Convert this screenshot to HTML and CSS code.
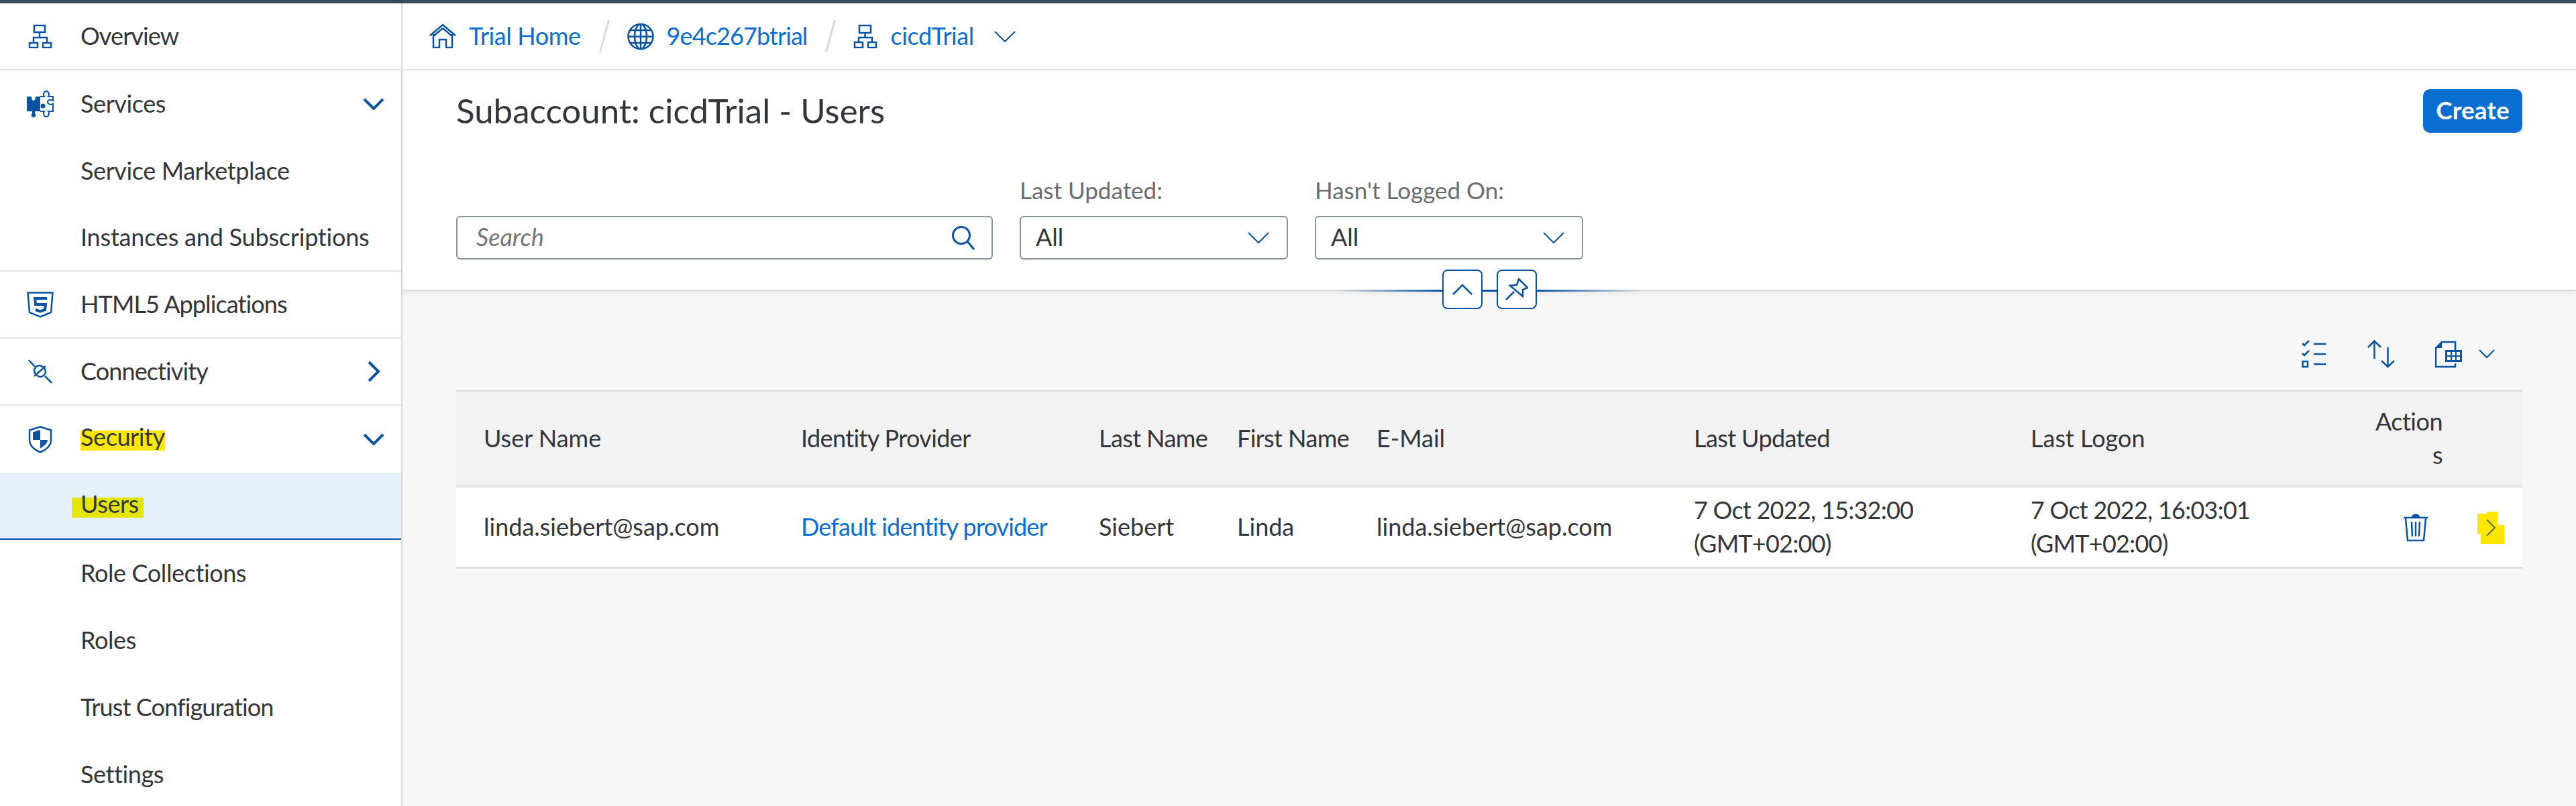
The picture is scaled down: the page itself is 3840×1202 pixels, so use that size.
FILE: index.html

```html
<!DOCTYPE html>
<html lang="en">
<head>
  <meta charset="UTF-8" />
  <title>Subaccount: cicdTrial - Users</title>
  <link rel="stylesheet" href="styles.css">
</head>
<body>

<div class="shell-bar"></div>

<div class="layout">
  <nav class="sidebar">
    <div class="nav-item divided">
      <div class="icon-slot"><svg width="36" height="36" viewBox="0 0 36 36"><path d="M9 2h16v10H9zM2 28h12v7H2zM22 28h12v7H22zM17 12v8M8 28v-8h20v8" /></svg></div>
      <span class="tight">Overview</span>
    </div>
    <div class="nav-item">
      <div class="icon-slot"><svg width="40" height="42" viewBox="0 0 40 42"><path class="solid" d="M0 10h7c0 4 1.500 6 3 6s3-2 3-6h7v22h-8v3c2 1 2 6-2 6s-4-5-2-6v-3H0z" /><circle class="solid" cx="24" cy="24" r="3.500" /><path class="thin" d="M20 10h6c-2-2-1-8 3-8s5 6 3 8h7v6c-4-2-8-1-8 2s4 5 8 3v11h-7c2 2 1 8-3 8s-5-6-3-8h-6" /></svg></div>
      <span>Services</span>
      <svg class="nav-arrow" width="32" height="18" viewBox="0 0 32 18"><path d="M2 2l14 14L30 2" /></svg>
    </div>
    <div class="nav-item sub"><span>Service Marketplace</span></div>
    <div class="nav-item sub divided"><span class="loose">Instances and Subscriptions</span></div>
    <div class="nav-item divided">
      <div class="icon-slot"><svg width="40" height="39" viewBox="0 0 40 39"><path d="M1.500 1.500h37L36 31l-16 6.500L4 31z" /><path class="thick" d="M30 10H12l1 9h15l-1 8-7 2.500-7-2.500" /></svg></div>
      <span class="tight">HTML5 Applications</span>
    </div>
    <div class="nav-item divided">
      <div class="icon-slot"><svg width="36" height="36" viewBox="0 0 36 36"><path d="M1 1l9 10M25 25l10 10" /><rect x="9" y="10" width="17" height="15" rx="7" transform="rotate(45 17.500 17.500)" /><path d="M9 25L26 10" /></svg></div>
      <span class="tight">Connectivity</span>
      <svg class="nav-arrow" width="32" height="32" viewBox="0 0 32 32"><path d="M9 2l14 14L9 30" /></svg>
    </div>
    <div class="nav-item">
      <div class="icon-slot"><svg width="36" height="41" viewBox="0 0 36 41"><path d="M18 1.500l16 5V21c0 9-8 15-16 18.500C10 36 2 30 2 21V6.500z" /><path class="solid" d="M7 9.500l11-3.500v15H7zM18 21h11c0 5-5 9-11 12.500z" /></svg></div>
      <span class="mark">Security</span>
      <svg class="nav-arrow" width="32" height="18" viewBox="0 0 32 18"><path d="M2 2l14 14L30 2" /></svg>
    </div>
    <div class="nav-item sub active"><span class="mark-users">Users</span></div>
    <div class="nav-item sub"><span>Role Collections</span></div>
    <div class="nav-item sub"><span>Roles</span></div>
    <div class="nav-item sub"><span class="tight">Trust Configuration</span></div>
    <div class="nav-item sub"><span>Settings</span></div>
  </nav>

  <main class="content">
    <div class="breadcrumb">
      <a class="crumb">
        <svg width="40" height="36" viewBox="0 0 40 36"><path d="M1 17L20 1l19 16M6 15v20h9V23h10v12h9V15M20 6L6 18M20 6l14 12" /></svg>
        <span>Trial Home</span>
      </a>
      <svg class="crumb-sep" width="16" height="48" viewBox="0 0 16 48"><path d="M1.500 48l13-48" /></svg>
      <a class="crumb">
        <svg width="40" height="41" viewBox="0 0 40 41"><circle cx="20" cy="20.500" r="18.500" /><ellipse cx="20" cy="20.500" rx="9" ry="18.500" /><path d="M20 2v37M4 11h32M2 20.500h36M4 30h32" /></svg>
        <span class="crumb-tight">9e4c267btrial</span>
      </a>
      <svg class="crumb-sep" width="16" height="48" viewBox="0 0 16 48"><path d="M1.500 48l13-48" /></svg>
      <a class="crumb">
        <svg width="36" height="36" viewBox="0 0 36 36"><path d="M9 2h17v11H9zM2 27h12v8H2zM22 27h12v8H22zM17.500 13v7M8 27v-7h20v7" /></svg>
        <span>cicdTrial</span>
      </a>
      <svg class="crumb-arrow" width="32" height="17" viewBox="0 0 32 17"><path d="M1 1l15 15L31 1" /></svg>
    </div>

    <header class="page-header">
      <div class="title-row">
        <h1>Subaccount: cicdTrial - Users</h1>
        <button class="btn-create">Create</button>
      </div>
      <div class="filters">
        <div class="field field-search">
          <div class="input">
            <span class="placeholder">Search</span>
            <svg class="input-icon" width="36" height="36" viewBox="0 0 36 36"><circle cx="15" cy="14" r="12.500" /><path d="M24 23l10 12" /></svg>
          </div>
        </div>
        <div class="field">
          <label>Last Updated:</label>
          <div class="input">
            <span>All</span>
            <svg class="input-arrow" width="32" height="17" viewBox="0 0 32 17"><path d="M1 1l15 15L31 1" /></svg>
          </div>
        </div>
        <div class="field">
          <label>Hasn't Logged On:</label>
          <div class="input">
            <span>All</span>
            <svg class="input-arrow" width="32" height="17" viewBox="0 0 32 17"><path d="M1 1l15 15L31 1" /></svg>
          </div>
        </div>
      </div>
      <div class="header-tools">
        <button class="tool-btn">
          <svg width="30" height="17" viewBox="0 0 30 17"><path d="M1 16L15 2l14 14" /></svg>
        </button>
        <button class="tool-btn">
          <svg width="34" height="33" viewBox="0 0 34 33"><path d="M1 32l12-12M20 1l13 13-7 3 0 10L7 11l10-1z" /></svg>
        </button>
      </div>
    </header>

    <section class="table-area">
      <div class="table-toolbar">
        <svg class="tb-list" width="36" height="42" viewBox="0 0 36 42"><path d="M1 5l3 3 7-7M1 20l3 3 7-7M18 6h18M18 21h18M18 36h18" /><rect x="1.500" y="32" width="7.500" height="8" /></svg>
        <svg class="tb-sort" width="41" height="42" viewBox="0 0 41 42"><path d="M10.500 28V2M1 11l9.500-9.500L20 11M30.500 11v29M21 31l9.500 9L40 31" /></svg>
        <svg class="tb-export" width="40" height="41" viewBox="0 0 40 41"><path d="M30 14V2H10L1 11v28h29v-5" /><path class="solid" d="M10 2v9H1z" /><path class="solid" fill-rule="evenodd" d="M15 14h25v18H15zM18 17v5h5v-5zM25 17v5h5v-5zM32 17v5h5v-5zM18 24v5h5v-5zM25 24v5h5v-5zM32 24v5h5v-5z" /></svg>
        <svg class="tb-arrow" width="24" height="14" viewBox="0 0 24 14"><path d="M1 1l11 11L23 1" /></svg>
      </div>

      <div class="table">
        <div class="table-row table-head">
          <div class="cell">User Name</div>
          <div class="cell tight-cell">Identity Provider</div>
          <div class="cell tight-cell">Last Name</div>
          <div class="cell tight-cell">First Name</div>
          <div class="cell">E-Mail</div>
          <div class="cell tight-cell">Last Updated</div>
          <div class="cell">Last Logon</div>
          <div class="cell cell-actions-head">Actions</div>
        </div>
        <div class="table-row table-body">
          <div class="cell">linda.siebert@sap.com</div>
          <div class="cell link">Default identity provider</div>
          <div class="cell">Siebert</div>
          <div class="cell">Linda</div>
          <div class="cell">linda.siebert@sap.com</div>
          <div class="cell date">7 Oct 2022, 15:32:00 (GMT+02:00)</div>
          <div class="cell date">7 Oct 2022, 16:03:01 (GMT+02:00)</div>
          <div class="cell cell-actions">
            <svg class="row-trash" width="38" height="42" viewBox="0 0 38 42"><path d="M1 6h36M4 7l3 33h24l3-33M13 12l1 22M19 12v22M25 12l-1 22" /><path class="solid" d="M13 5c0-6 12-6 12 0z" /></svg>
            <svg class="row-nav" width="40" height="48" viewBox="0 0 40 48"><path class="marker" d="M0 3h15V0h15v20h10v28H5V33H0z" /><path class="nav-chevron" d="M14 12l12 12-12 12" /></svg>
          </div>
        </div>
      </div>
    </section>
  </main>
</div>

</body>
</html>
```

FILE: styles.css

```css
* {
  box-sizing: border-box;
}
html,
body {
  height: 100%;
}
body {
  margin: 0;
  overflow: hidden;
  font-family: 'Lato', 'Liberation Sans', sans-serif;
  font-size: 36px;
  color: #32363a;
  background: #f7f7f7;
}
svg {
  flex: none;
  display: block;
  fill: none;
  stroke: #0854a0;
  stroke-width: 2.5;
}
svg .solid {
  fill: #0854a0;
  stroke: none;
}
.shell-bar {
  height: 5px;
  background: #354a5f;
}
.layout {
  display: flex;
  height: 1197px;
  overflow: hidden;
}

/* left navigation */
.sidebar {
  flex: none;
  width: 600px;
  height: 100%;
  overflow: hidden;
  background: #fff;
  border-right: 2px solid #d9d9d9;
  letter-spacing: -0.4px;
}
.nav-item {
  display: flex;
  align-items: center;
  height: 100px;
  padding-right: 25px;
}
.nav-item span {
  margin-bottom: 3px;
}
.nav-item.divided {
  border-bottom: 2px solid #e5e5e5;
}
.nav-item.sub {
  padding-left: 120px;
}
.nav-item.active {
  background: #e5f0fa;
  border-bottom: 2px solid #0854a0;
}
.icon-slot {
  flex: none;
  display: flex;
  justify-content: center;
  width: 120px;
}
.icon-slot .thick {
  stroke-width: 4;
}
.icon-slot .thin {
  stroke-width: 2;
}
.tight {
  letter-spacing: -0.9px;
}
.loose {
  letter-spacing: -0.2px;
}
.nav-arrow {
  margin-left: auto;
  stroke-width: 4;
}
.nav-item .mark,
.nav-item .mark-users {
  line-height: 18px;
  padding-bottom: 12px;
  margin-bottom: 0;
}
.nav-item .mark {
  margin-top: 4px;
  background: #ffe600;
}
.nav-item .mark-users {
  margin-top: 6px;
  margin-left: -13px;
  padding-left: 13px;
  padding-right: 7px;
  background: #e5e600;
}

.content {
  flex: 1;
  min-width: 0;
  display: flex;
  flex-direction: column;
}

/* breadcrumb */
.breadcrumb {
  display: flex;
  align-items: center;
  height: 100px;
  padding-left: 40px;
  background: #fff;
  border-bottom: 2px solid #e5e5e5;
  color: #0a6ed1;
  letter-spacing: -0.4px;
}
.crumb {
  display: flex;
  align-items: center;
  gap: 19px;
}
.crumb span {
  margin-bottom: 3px;
}
.crumb-tight {
  letter-spacing: -0.9px;
}
.crumb-sep {
  margin: 0 26px 0 27px;
  stroke: #d9d9d9;
  stroke-width: 3;
}
.crumb-arrow {
  margin-left: 30px;
  stroke-width: 2;
}

/* page header */
.page-header {
  position: relative;
  height: 329px;
  padding: 0 80px;
  background: #fff;
  border-bottom: 2px solid #d9d9d9;
  box-shadow: 0 4px 6px rgba(0, 0, 0, 0.06);
}
.title-row {
  display: flex;
  align-items: center;
  justify-content: space-between;
  height: 65px;
  margin-top: 28px;
}
h1 {
  margin: 0 0 2px;
  font-size: 51px;
  font-weight: 400;
}
.btn-create {
  width: 148px;
  height: 65px;
  padding: 0 0 5px;
  border: none;
  border-radius: 10px;
  background: #0a6ed1;
  color: #fff;
  font: 700 37px 'Lato', 'Liberation Sans', sans-serif;
}
.filters {
  display: flex;
  align-items: flex-end;
  gap: 40px;
  margin-top: 124px;
}
.field {
  width: 400px;
  position: relative;
}
.field-search {
  width: 800px;
}
.field label {
  position: absolute;
  left: 0;
  top: -60px;
  color: #6a6d70;
  font-size: 35px;
}
.input {
  display: flex;
  align-items: center;
  justify-content: space-between;
  height: 65px;
  padding: 0 26px 0 22px;
  background: #fff;
  border: 2px solid #89919a;
  border-radius: 6px;
}
.input span {
  margin-bottom: 4px;
}
.input .placeholder {
  margin-left: 6px;
  font-style: italic;
  color: #74777a;
}
.input-arrow {
  stroke-width: 2;
}
.input-icon {
  margin-right: -2px;
  stroke-width: 3;
}

/* collapse + pin over the header edge */
.header-tools {
  position: absolute;
  left: 1392px;
  top: 297px;
  width: 457px;
  height: 59px;
  display: flex;
  justify-content: center;
  gap: 21px;
  background: linear-gradient(to right, transparent, #0854a0 35%, #0854a0 65%, transparent) center 30px / 100% 3px no-repeat;
}
.tool-btn {
  width: 60px;
  height: 59px;
  padding: 0;
  display: flex;
  align-items: center;
  justify-content: center;
  background: #fff;
  border: 2px solid #0854a0;
  border-radius: 8px;
}

/* table */
.table-area {
  padding: 0 80px;
}
.table-toolbar {
  display: flex;
  align-items: center;
  justify-content: flex-end;
  height: 148px;
  padding-top: 40px;
  padding-right: 41px;
}
.tb-list {
  margin-right: 62px;
}
.tb-sort {
  margin-right: 60px;
}
.tb-export {
  margin-right: 25px;
}
.tb-arrow {
  stroke-width: 2;
}
.table-row {
  display: grid;
  grid-template-columns: 473px 444px 206px 208px 473px 502px 517px 1fr;
}
.cell {
  padding-left: 41px;
  line-height: 50px;
  white-space: nowrap;
}
.cell.date {
  white-space: normal;
  letter-spacing: -0.75px;
}
.tight-cell {
  letter-spacing: -0.6px;
}
.table-head {
  height: 145px;
  align-items: center;
  background: #f2f2f2;
  border-top: 2px solid #d9d9d9;
  border-bottom: 4px solid #e5e5e5;
}
.table-head .cell {
  margin-bottom: 2px;
}
.table-body {
  height: 121px;
  align-items: center;
  background: #fff;
  border-bottom: 2px solid #d9d9d9;
}
.table-body .cell {
  margin-bottom: 3px;
}
.link {
  color: #0a6ed1;
  letter-spacing: -0.85px;
}
.cell.cell-actions-head {
  width: 138px;
  padding-left: 30px;
  white-space: normal;
  word-break: break-all;
  text-align: right;
  letter-spacing: -0.5px;
}
.table-body .cell-actions {
  display: flex;
  align-items: center;
  margin-bottom: 0;
  padding-left: 79px;
  gap: 73px;
}
.row-nav {
  stroke: #5f6a10;
  stroke-width: 2;
}
.row-nav .marker {
  fill: #ffe600;
  stroke: none;
}
```
